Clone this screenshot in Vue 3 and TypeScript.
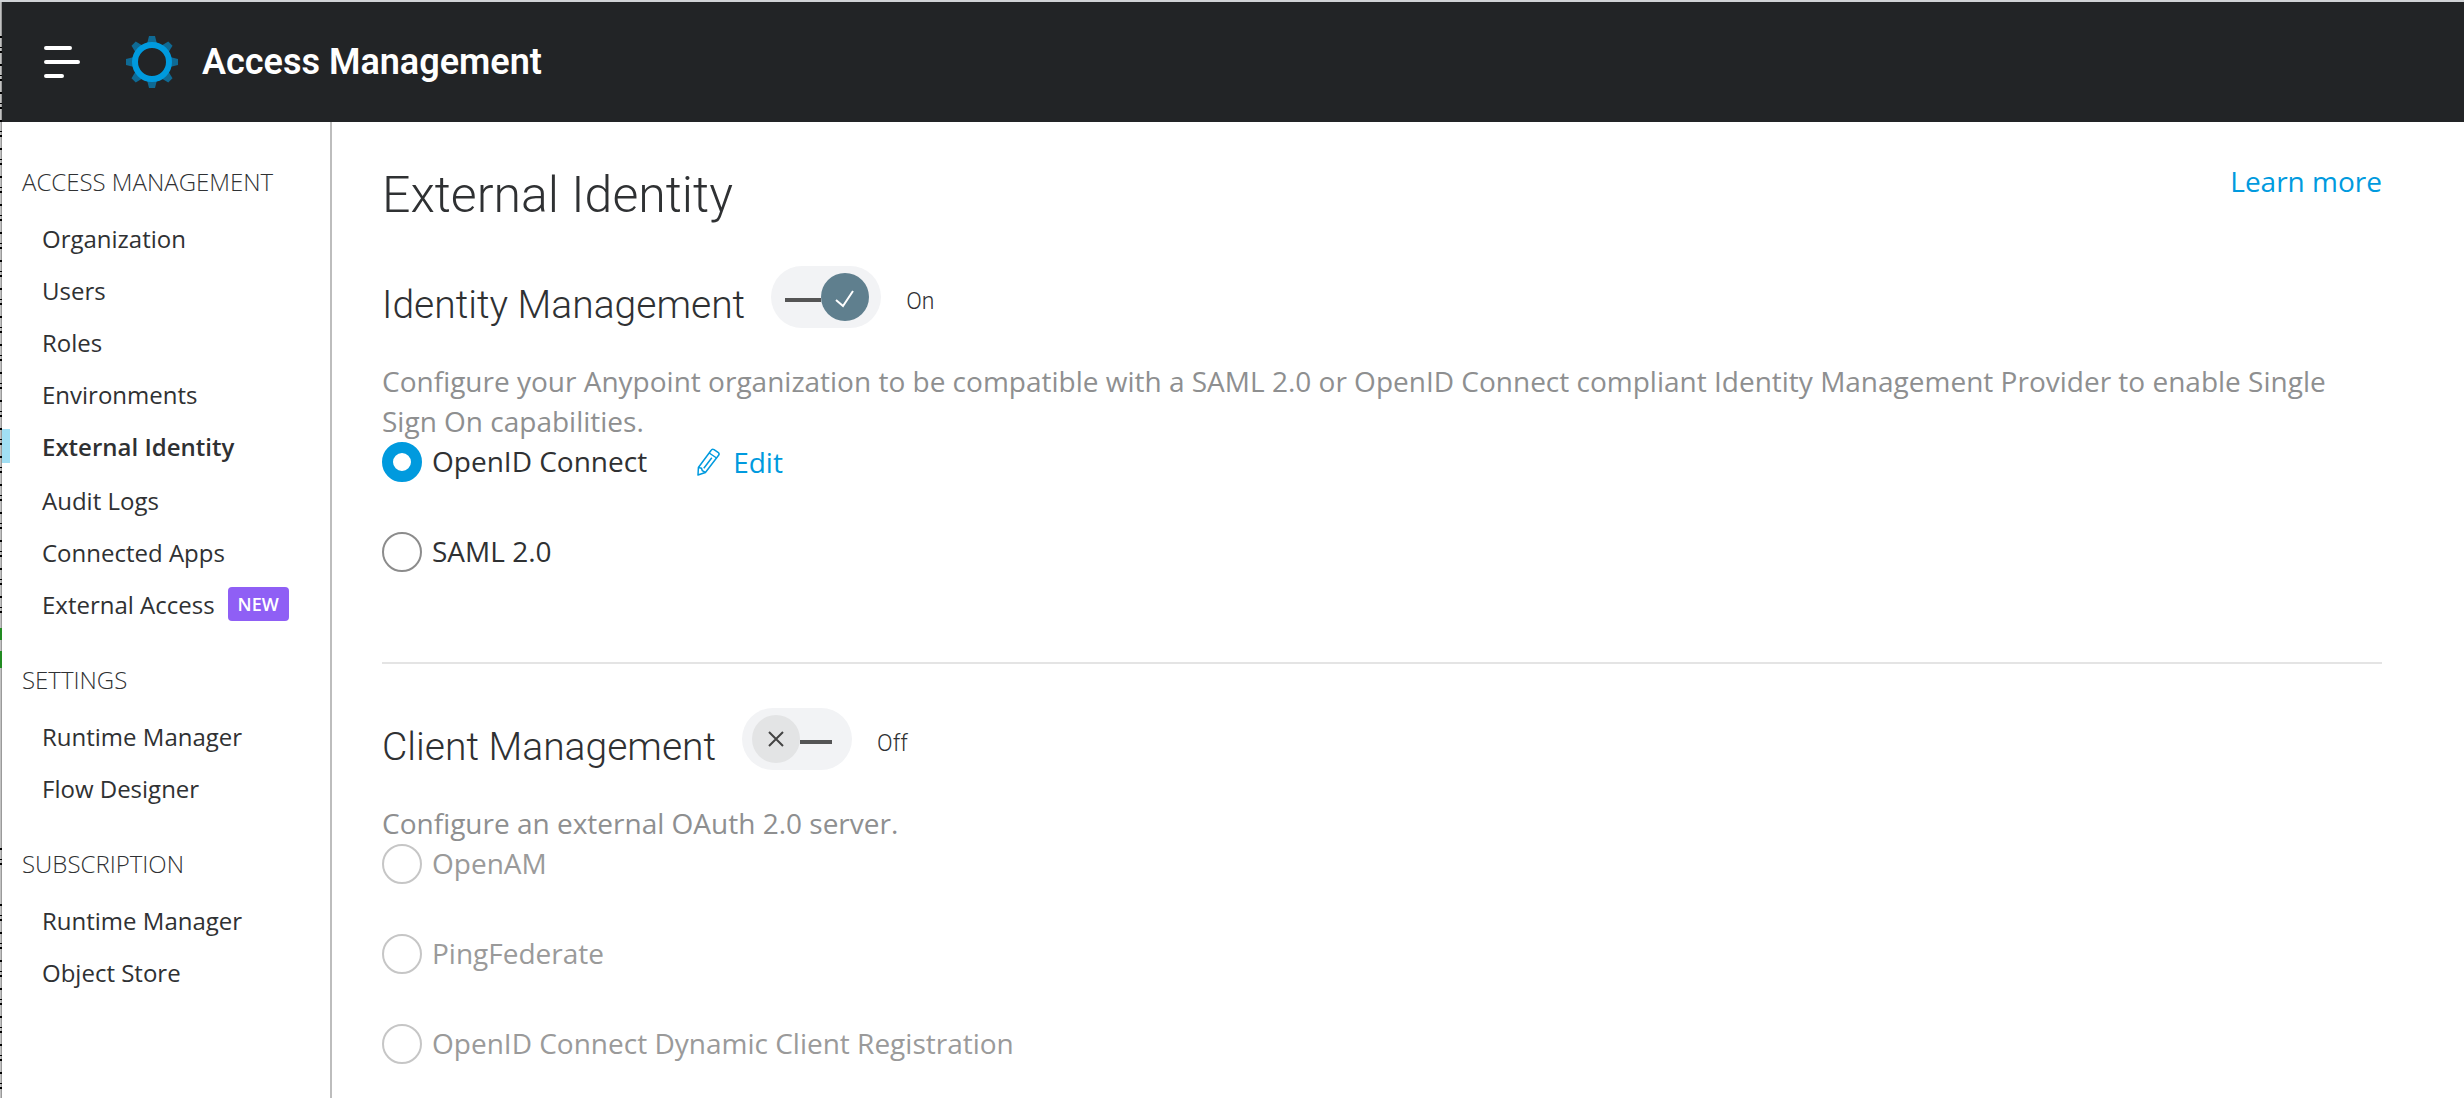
<script setup lang="ts">
import { ref } from 'vue'

interface NavItem {
  label: string
  active?: boolean
  badge?: string
}

interface NavSection {
  title: string
  items: NavItem[]
}

const sections: NavSection[] = [
  {
    title: 'ACCESS MANAGEMENT',
    items: [
      { label: 'Organization' },
      { label: 'Users' },
      { label: 'Roles' },
      { label: 'Environments' },
      { label: 'External Identity', active: true },
      { label: 'Audit Logs' },
      { label: 'Connected Apps' },
      { label: 'External Access', badge: 'NEW' },
    ],
  },
  { title: 'SETTINGS', items: [{ label: 'Runtime Manager' }, { label: 'Flow Designer' }] },
  { title: 'SUBSCRIPTION', items: [{ label: 'Runtime Manager' }, { label: 'Object Store' }] },
]

const identityOn = ref(true)
const clientOn = ref(false)
const identityProvider = ref('OpenID Connect')
const clientProvider = ref('')

const identityProviders = ['OpenID Connect', 'SAML 2.0']
const clientProviders = ['OpenAM', 'PingFederate', 'OpenID Connect Dynamic Client Registration']
const teeth = [0, 45, 90, 135, 180, 225, 270, 315]
</script>

<template>
  <div class="app">
    <header class="topbar">
      <button class="menu" type="button" aria-label="Open navigation">
        <svg width="36" height="32" viewBox="0 0 36 32" fill="none" stroke="#fff" stroke-width="4" stroke-linecap="round">
          <path d="M2 2H26M2 16H34M2 30H18" />
        </svg>
      </button>
      <svg class="gear" width="52" height="52" viewBox="-26 -26 52 52" aria-hidden="true">
        <path v-for="a in teeth" :key="a" d="M-5 -18L-3 -26H3L5 -18Z" fill="#0f6a94" :transform="`rotate(${a})`" />
        <circle r="17" fill="none" stroke="#009ade" stroke-width="6" />
      </svg>
      <span class="product">Access Management</span>
    </header>

    <div class="body">
      <nav class="sidebar">
        <section v-for="section in sections" :key="section.title" class="group">
          <h2 class="group-title">{{ section.title }}</h2>
          <ul class="items">
            <li v-for="item in section.items" :key="item.label" :class="['item', { active: item.active }]">
              <a href="#">{{ item.label }}</a>
              <span v-if="item.badge" class="badge">{{ item.badge }}</span>
            </li>
          </ul>
        </section>
      </nav>

      <main class="content">
        <div class="title-row">
          <h1>External Identity</h1>
          <a class="link" href="#">Learn more</a>
        </div>

        <section class="panel">
          <div class="panel-head">
            <h2 id="identity-title">Identity Management</h2>
            <button
              :class="['toggle', { on: identityOn }]"
              type="button"
              role="switch"
              :aria-checked="identityOn"
              aria-labelledby="identity-title"
              @click="identityOn = !identityOn"
            >
              <span class="bar"></span>
              <span class="knob">
                <svg width="24" height="24" viewBox="0 0 24 24" fill="none" stroke-width="2">
                  <path v-if="identityOn" d="M3 15L10 21L20 6" />
                  <path v-else d="M5 5L19 19M19 5L5 19" />
                </svg>
              </span>
            </button>
            <span class="state">{{ identityOn ? 'On' : 'Off' }}</span>
          </div>
          <p class="description">
            Configure your Anypoint organization to be compatible with a SAML 2.0 or OpenID Connect compliant Identity
            Management Provider to enable Single Sign On capabilities.
          </p>
          <div class="options">
            <div v-for="p in identityProviders" :key="p" class="option">
              <label><input v-model="identityProvider" type="radio" name="identity" :value="p" :disabled="!identityOn" />{{ p }}</label>
              <a v-if="p === 'OpenID Connect'" class="link edit" href="#">
                <svg width="24" height="28" viewBox="0 0 24 28" fill="none" stroke="currentColor" stroke-width="1.5" stroke-linejoin="round">
                  <path d="M14 2.5Q15 .6 17 1.6L21.400 4.600Q22.600 5.600 21.800 7L8.400 24.500L1 27L1.400 19.500Z" />
                  <path d="M12.200 5L19.600 10M1.400 19.500L4.500 20.200L5.300 22.700L8.400 24.500M14.800 9.800L6.800 20.300" />
                </svg>
                <span>Edit</span>
              </a>
            </div>
          </div>
        </section>

        <hr />

        <section class="panel">
          <div class="panel-head">
            <h2 id="client-title">Client Management</h2>
            <button
              :class="['toggle', { on: clientOn }]"
              type="button"
              role="switch"
              :aria-checked="clientOn"
              aria-labelledby="client-title"
              @click="clientOn = !clientOn"
            >
              <span class="bar"></span>
              <span class="knob">
                <svg width="24" height="24" viewBox="0 0 24 24" fill="none" stroke-width="2">
                  <path v-if="clientOn" d="M3 15L10 21L20 6" />
                  <path v-else d="M5 5L19 19M19 5L5 19" />
                </svg>
              </span>
            </button>
            <span class="state">{{ clientOn ? 'On' : 'Off' }}</span>
          </div>
          <p class="description">Configure an external OAuth 2.0 server.</p>
          <div class="options">
            <div v-for="p in clientProviders" :key="p" class="option">
              <label :class="{ disabled: !clientOn }">
                <input v-model="clientProvider" type="radio" name="client" :value="p" :disabled="!clientOn" />{{ p }}
              </label>
            </div>
          </div>
        </section>
      </main>
    </div>
  </div>
</template>

<style>
body {
  margin: 0;
  background: #fff;
}
</style>

<style scoped>
.app {
  --edge: linear-gradient(90deg, #c2c2c2 50%, #9a9a9a 50%);
  display: flex;
  flex-direction: column;
  box-sizing: border-box;
  min-height: 100vh;
  padding-left: 2px;
  border-top: 2px solid #d0d3d6;
  background:
    linear-gradient(#228b22, #228b22) 0 626px / 2px 12px no-repeat,
    linear-gradient(#228b22, #228b22) 0 649px / 2px 17px no-repeat,
    var(--edge) 0 0 / 2px 32px no-repeat,
    var(--edge) 0 612px / 2px 232px no-repeat,
    var(--edge) 0 870px / 2px 30px no-repeat,
    linear-gradient(#000 2px, transparent 2px 11px, #000 11px 12px, transparent 12px 15px, #000 15px 17px, transparent 17px) 0 6px / 2px 28px repeat-y,
    var(--edge) 0 0 / 2px 100% no-repeat,
    #fff;
  font-family: 'Open Sans', 'Noto Sans', sans-serif;
  color: #2f3133;
}
a {
  color: inherit;
  text-decoration: none;
}
button {
  padding: 0;
  border: 0;
  background: none;
}
.topbar {
  display: flex;
  align-items: center;
  height: 120px;
  padding-left: 42px;
  background: #222426;
}
.menu {
  display: flex;
}
.gear {
  margin: 0 24px 0 46px;
}
.product {
  font-family: Roboto, sans-serif;
  font-size: 36px;
  font-weight: 600;
  color: #fff;
}
.body {
  display: flex;
  flex: 1;
}
.sidebar {
  box-sizing: border-box;
  flex: 0 0 330px;
  padding-top: 34px;
  border-right: 2px solid #bdbdbd;
  font-size: 24px;
}
.group {
  margin-bottom: 24px;
}
.group-title {
  margin: 0 0 4px;
  padding-left: 20px;
  font-size: 24px;
  font-weight: 300;
  line-height: 52px;
}
.items {
  margin: 0;
  padding: 0;
  list-style: none;
}
.item {
  display: flex;
  align-items: center;
  height: 52px;
  padding-left: 40px;
}
.item.active {
  margin-bottom: 2px;
  padding-left: 0;
  font-weight: 600;
}
.item.active::before {
  width: 8px;
  height: 34px;
  margin-right: 32px;
  background: #a1dff4;
  content: '';
}
.badge {
  margin-left: 13px;
  padding: 0 10px;
  border-radius: 4px;
  background: #8f5ff5;
  color: #fff;
  font-size: 18px;
  font-weight: 600;
  line-height: 34px;
}
.content {
  flex: 1;
  padding: 40px 82px 32px 50px;
}
.title-row {
  display: flex;
  justify-content: space-between;
}
h1,
h2 {
  font-weight: 300;
}
h1 {
  margin: 0;
  font-family: Roboto, sans-serif;
  font-size: 50px;
  line-height: 66px;
}
.link {
  color: #009ade;
  font-size: 28px;
  line-height: 38px;
}
.panel-head {
  display: flex;
  align-items: flex-start;
  height: 62px;
}
.panel-head h2 {
  margin: 0;
  font-family: Roboto, sans-serif;
  font-size: 39px;
  line-height: 78px;
}
.title-row + .panel {
  margin-top: 38px;
}
.toggle {
  display: flex;
  align-items: center;
  box-sizing: border-box;
  width: 110px;
  height: 62px;
  margin-left: 26px;
  padding: 0 10px;
  border-radius: 31px;
  background: #f2f3f5;
}
.toggle .bar {
  order: 2;
  width: 32px;
  height: 4px;
  margin-top: 6px;
  background: #555;
}
.toggle .knob {
  display: flex;
  align-items: center;
  justify-content: center;
  width: 48px;
  height: 48px;
  border-radius: 50%;
  background: #e3e4e5;
  stroke: #444;
}
.toggle.on .bar {
  order: 0;
  width: 36px;
  margin-left: 4px;
}
.toggle.on .knob {
  background: #5f7f8e;
  stroke: #fff;
}
.state {
  margin-left: 25px;
  font-family: Roboto, sans-serif;
  font-size: 23px;
  font-weight: 300;
  line-height: 72px;
}
.description {
  margin: 33px 0 1px;
  color: #8e8f90;
  font-size: 28px;
  line-height: 40px;
}
.options {
  display: flex;
  flex-direction: column;
  gap: 50px;
}
.option {
  display: flex;
  height: 40px;
}
label {
  display: flex;
  align-items: flex-start;
  gap: 10px;
  font-size: 28px;
  line-height: 38px;
}
label.disabled {
  color: #9a9a9a;
}
input[type='radio'] {
  box-sizing: border-box;
  width: 40px;
  height: 40px;
  margin: 0;
  appearance: none;
  border: 2px solid #8c8c8c;
  border-radius: 50%;
  background: #fff;
}
input[type='radio']:checked {
  border: 11px solid #009ade;
}
input[type='radio']:disabled {
  border-color: #c6c6c6;
}
.edit {
  display: flex;
  align-items: center;
  gap: 12px;
  margin-left: 50px;
  line-height: 40px;
}
hr {
  height: 2px;
  margin: 90px 0 44px;
  border: 0;
  background: #e4e4e4;
}
</style>
